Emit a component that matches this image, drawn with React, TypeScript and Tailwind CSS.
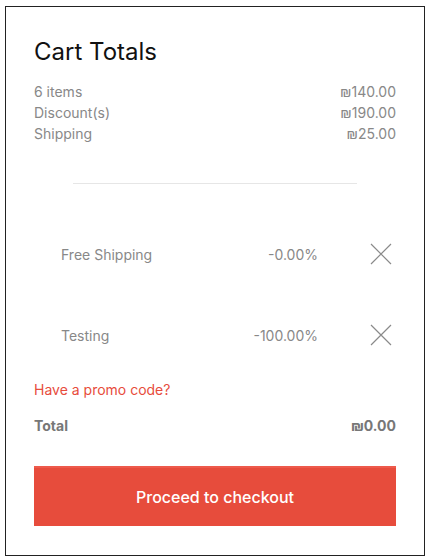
const rows = [
  { label: "6 items", value: "₪140.00" },
  { label: "Discount(s)", value: "₪190.00" },
  { label: "Shipping", value: "₪25.00" },
];

const discounts = [
  { name: "Free Shipping", amount: "-0.00%" },
  { name: "Testing", amount: "-100.00%" },
];

function CloseIcon() {
  return (
    <svg width="22" height="22" viewBox="0 0 22 22" fill="none" stroke="#8a8a8a" strokeWidth="1.2">
      <path d="M1 1L21 21M21 1L1 21" />
    </svg>
  );
}

export default function App() {
  return (
    <div className="bg-white pl-[5px] pt-[6px]" style={{ fontFamily: "Inter, 'Noto Sans', sans-serif" }}>
      <div className="h-[550px] w-[420px] border border-[#222] px-[28px] pt-[29px]">
        <h2 className="text-[24px] leading-[32px] font-normal text-[#111]">Cart Totals</h2>

        <div className="mt-[13px] text-[14px] leading-[21px] text-[#888]">
          {rows.map((r) => (
            <div key={r.label} className="flex justify-between">
              <span>{r.label}</span>
              <span>{r.value}</span>
            </div>
          ))}
        </div>

        <div className="mx-[39px] mt-[39px] h-px bg-[#e6e6e6]" />

        <div className="mt-[50px]">
          {discounts.map((d, i) => (
            <div key={d.name} className={`flex h-[40px] items-center text-[14px] text-[#888] ${i > 0 ? "mt-[41px]" : ""}`}>
              <span className="ml-[27px] flex-1">{d.name}</span>
              <span className="w-[120px] text-right">{d.amount}</span>
              <button className="ml-[52px] mr-[4px]">
                <CloseIcon />
              </button>
            </div>
          ))}
        </div>

        <p className="mt-[24px] text-[14px] leading-[21px] text-[#e74c3c]">Have a promo code?</p>

        <div className="mt-[15px] flex justify-between text-[14px] leading-[21px] font-bold text-[#777]">
          <span>Total</span>
          <span>₪0.00</span>
        </div>

        <button className="mt-[30px] h-[60px] w-full border-t-2 border-[#ee5a4c] bg-[#e74c3c] text-[16px] font-medium text-white">
          Proceed to checkout
        </button>
      </div>
    </div>
  );
}
